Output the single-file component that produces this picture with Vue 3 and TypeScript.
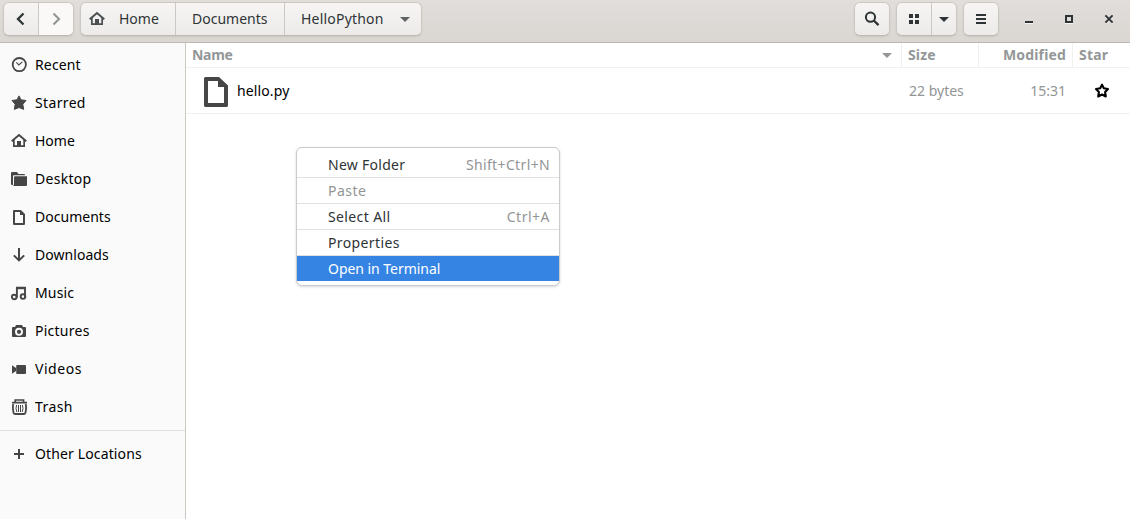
<script setup lang="ts">
interface Place { name: string; icon: string; ls: number }
interface MenuRow { label: string; keys?: string; kind?: string; ls: number; kls?: number }

const icons: Record<string, string> = {
  clock: '<circle cx="8.3" cy="7.6" r="6.6" fill="none" stroke="currentColor" stroke-width="1.8"/><path d="M5.3 5.4 7.8 7.9 11.4 4.8" fill="none" stroke="currentColor" stroke-width="1.1"/>',
  star: '<path d="M8 .9 10 4.8 15 5.5 11.8 9.2 12.7 14.4 8 12.5 3.3 14.4 4.2 9.2 1 5.5 6 4.8Z" fill="currentColor" stroke="currentColor" stroke-width="1" stroke-linejoin="round"/>',
  home: '<path d="M.7 8.2 8 2 15.3 8.2" fill="none" stroke="currentColor" stroke-width="1.9"/><path d="M2 7V14H14V7L12.3 5.6V12.2H10V8H6V12.2H3.7V5.6Z" fill="currentColor"/>',
  folder: '<path d="M0 2.2Q0 1 1 1H6L7.5 3H13Q14 3 14 4V4.3H3Q2 4.3 2 5.5V14H1Q0 14 0 13Z" fill="currentColor"/><path d="M3 6.3Q3 5.3 4 5.3H16V14Q16 15 15 15H2Q3 14.5 3 13Z" fill="currentColor"/>',
  page: '<path d="M3 2H9.5L13 5.5V15H3Z" fill="none" stroke="currentColor" stroke-width="2" stroke-linejoin="round"/><path d="M9 2V6H13Z" fill="currentColor"/>',
  down: '<path d="M8 1V13M2.8 8.4 8 13.4 13.2 8.4" fill="none" stroke="currentColor" stroke-width="2"/>',
  music: '<g transform="translate(0 .8)"><path d="M5.9 12V2H14V11.5" fill="none" stroke="currentColor" stroke-width="1.9"/><path d="M5 1.2H15V3.4H5Z" fill="currentColor"/><circle cx="3.2" cy="11.2" r="2.3" fill="none" stroke="currentColor" stroke-width="1.9"/><circle cx="12" cy="10.8" r="2.3" fill="none" stroke="currentColor" stroke-width="1.9"/></g>',
  camera: '<path fill-rule="evenodd" d="M5 2H11L12 4H14Q15 4 15 5V13Q15 14 14 14H2Q1 14 1 13V5Q1 4 2 4H4ZM8 4.8A4 4 0 1 0 8 12.8A4 4 0 1 0 8 4.8Z" fill="currentColor"/><circle cx="8" cy="8.8" r="2.1" fill="currentColor"/>',
  video: '<path d="M1 4.2 5 7V10L1 12.8Z" fill="currentColor"/><rect x="5.2" y="4" width="9.8" height="9" rx="1" fill="currentColor"/>',
  trash: '<path d="M1 3.6H16M4.2 2.7V1H12.6V2.7" fill="none" stroke="currentColor" stroke-width="1.6"/><path d="M2.3 5Q1.3 9 2.7 14.2Q3 15 4.3 15H12.7Q14 15 14.3 14.2Q15.7 9 14.7 5" fill="none" stroke="currentColor" stroke-width="1.8"/><path d="M5.6 6Q4.3 9.5 5.8 13M7.5 6V13M9.5 6V13M11.4 6Q12.7 9.5 11.2 13" fill="none" stroke="currentColor" stroke-width="1"/>',
  plus: '<path d="M8 3V13M3 8H13" stroke="currentColor" stroke-width="2"/>',
}

const places: Place[] = [
  { name: 'Recent', icon: 'clock', ls: 0.15 },
  { name: 'Starred', icon: 'star', ls: 0.35 },
  { name: 'Home', icon: 'home', ls: 0 },
  { name: 'Desktop', icon: 'folder', ls: 0.3 },
  { name: 'Documents', icon: 'page', ls: 0.02 },
  { name: 'Downloads', icon: 'down', ls: 0.05 },
  { name: 'Music', icon: 'music', ls: 0.15 },
  { name: 'Pictures', icon: 'camera', ls: 0.25 },
  { name: 'Videos', icon: 'video', ls: 0.55 },
  { name: 'Trash', icon: 'trash', ls: 0.4 },
]

const menu: MenuRow[] = [
  { label: 'New Folder', keys: 'Shift+Ctrl+N', ls: 0.27, kls: 0.36 },
  { label: 'Paste', kind: 'disabled', ls: 0.45 },
  { label: 'Select All', keys: 'Ctrl+A', ls: 0.38, kls: 0.5 },
  { label: 'Properties', ls: 0.38 },
  { label: 'Open in Terminal', kind: 'active', ls: -0.04 },
]
</script>

<template>
  <div class="window">
    <header class="bar">
      <div class="group nav">
        <button class="btn"><svg width="16" height="16"><path d="M10.5 2.5 5 8l5.5 5.5" fill="none" stroke="currentColor" stroke-width="2.3" /></svg></button>
        <button class="btn off"><svg width="16" height="16"><path d="M5.5 2.5 11 8l-5.5 5.5" fill="none" stroke="currentColor" stroke-width="2.1" /></svg></button>
      </div>
      <div class="group path">
        <button class="btn crumb home"><svg width="16" height="16" v-html="icons.home"></svg><span>Home</span></button>
        <button class="btn crumb docs"><span>Documents</span></button>
        <button class="btn crumb here"><span>HelloPython</span><i class="tri"></i></button>
      </div>
      <div class="space"></div>
      <div class="group single search">
        <button class="btn"><svg width="16" height="16"><circle cx="6.5" cy="6.2" r="4.6" fill="none" stroke="currentColor" stroke-width="2" /><path d="M9.8 9.5 14.5 14.2" stroke="currentColor" stroke-width="2.4" /></svg></button>
      </div>
      <div class="group view">
        <button class="btn"><svg width="16" height="16"><path d="M3 3h4v4H3zM9 3h4v4H9zM3 9h4v4H3zM9 9h4v4H9z" fill="currentColor" /></svg></button>
        <button class="btn"><i class="tri"></i></button>
      </div>
      <div class="group single">
        <button class="btn"><svg width="16" height="16"><path d="M3 4h10M3 8h10M3 12h10" stroke="currentColor" stroke-width="2" /></svg></button>
      </div>
      <div class="controls">
        <svg width="16" height="16"><path d="M4 12.5h8" stroke="#fff" stroke-opacity=".7" /><path d="M4 11h8" stroke="currentColor" stroke-width="2" /></svg>
        <svg width="16" height="16"><path d="M5 5h6v6H5z" fill="none" stroke="currentColor" stroke-width="2" /><path d="M4 12.5h8" stroke="#fff" stroke-opacity=".7" /></svg>
        <svg width="16" height="16"><path d="M4.4 5.4l7.2 7.2M11.6 5.4l-7.2 7.2" stroke="#fff" stroke-opacity=".5" stroke-width="2" /><path d="M4.4 4.4l7.2 7.2M11.6 4.4l-7.2 7.2" stroke="currentColor" stroke-width="2" /></svg>
      </div>
    </header>

    <div class="body">
      <aside class="side">
        <div v-for="p in places" :key="p.name" class="place">
          <svg width="16" height="16" v-html="icons[p.icon]"></svg>
          <span :style="{ letterSpacing: p.ls + 'px' }">{{ p.name }}</span>
        </div>
        <hr />
        <div class="place other"><svg width="16" height="16" v-html="icons.plus"></svg><span>Other Locations</span></div>
      </aside>

      <main class="list">
        <div class="row heads">
          <div class="name"><span>Name</span><i class="tri"></i></div>
          <div class="size">Size</div>
          <div class="mod">Modified</div>
          <div class="fav">Star</div>
        </div>
        <div class="row file">
          <div class="name">
            <svg width="24" height="30"><path fill-rule="evenodd" d="M0 1.5Q0 0 1.5 0H15L24 8.5V28.5Q24 30 22.5 30H1.5Q0 30 0 28.5ZM4 4V26H20V10H14V4Z" fill="#464646" /></svg>
            <span>hello.py</span>
          </div>
          <div class="size">22 bytes</div>
          <div class="mod">15:31</div>
          <div class="fav"><svg width="16" height="16"><path d="M8 1.6 9.8 5.3 14 6 11.1 9 11.8 13.5 8 11.5 4.2 13.5 4.9 9 2 6 6.2 5.3Z" fill="none" stroke="#000" stroke-width="2.1" stroke-linejoin="round" /></svg></div>
        </div>
      </main>
    </div>

    <div class="menu">
      <div v-for="m in menu" :key="m.label" class="item" :class="m.kind">
        <span :style="{ letterSpacing: m.ls + 'px' }">{{ m.label }}</span>
        <span v-if="m.keys" class="keys" :style="{ letterSpacing: m.kls + 'px' }">{{ m.keys }}</span>
      </div>
    </div>
  </div>
</template>

<style>
body { margin: 0; overflow: hidden; }
</style>

<style scoped>
.window { position: relative; width: 1130px; height: 519px; display: flex; flex-direction: column; background: #fff; font: 14px/20px "Noto Sans", "Open Sans", sans-serif; color: #000; white-space: nowrap; overflow: hidden; }
.window * { box-sizing: border-box; }
svg { display: block; flex: none; }
.bar { height: 43px; flex: none; display: flex; align-items: flex-start; padding: 2px 13px 0 3px; background: linear-gradient(#e1dedb, #dad6d2); border-bottom: 1px solid #bfb8b1; color: #2e3436; }
.group { display: flex; height: 34px; border: 1px solid #cdc7c2; border-bottom-color: #bfb8b1; border-radius: 6px; overflow: hidden; box-shadow: 0 1px 2px rgba(0, 0, 0, .08); }
.btn { display: flex; align-items: center; justify-content: center; border: 0; border-left: 1px solid #cdc7c2; margin: 0; padding: 0; height: 32px; background: linear-gradient(#f6f5f4, #edebe9); color: inherit; font: inherit; }
.btn:first-child { border-left: 0; }
.btn.off { background: #faf9f8; color: #929595; }
.nav { width: 71px; margin-right: 6px; }
.nav .btn { width: 34px; }
.nav .off { width: 35px; }
.path { width: 342px; }
.crumb { justify-content: flex-start; }
.home { width: 94px; padding-left: 8px; color: #4a4f51; }
.home span { margin-left: 14px; color: #2e3436; }
.docs { width: 109px; padding-left: 16px; }
.here { width: 137px; padding-left: 16px; }
.here span { width: 83px; text-align: left; letter-spacing: .2px; }
.here .tri { margin-left: 16px; opacity: .75; }
.tri { display: block; width: 0; height: 0; border: 5px solid transparent; border-top-color: currentColor; border-bottom: 0; }
.space { flex: 1; }
.single { width: 36px; }
.single .btn { width: 34px; }
.search { margin-right: 6px; }
.view { width: 61px; margin-right: 6px; }
.view .btn:first-child { width: 34px; }
.view .btn:last-child { width: 25px; }
.controls { display: flex; gap: 24px; margin: 9px 0 0 22px; }
.body { flex: 1; display: flex; min-height: 0; }
.side { width: 186px; flex: none; background: #fafafa; border-right: 1px solid #cdc7c2; padding-top: 3px; }
.place { display: flex; align-items: center; height: 38px; padding-left: 11px; gap: 8px; }
.place svg { color: #464646; }
.other { letter-spacing: .13px; }
hr { height: 1px; border: 0; margin: 4px 0; background: #dfdfdf; }
.list { flex: 1; }
.row { display: flex; border-bottom: 1px solid #f1f1f1; }
.row > div { display: flex; align-items: center; }
.name { width: 716px; padding-left: 6px; border-right: 1px solid transparent; }
.size { width: 77px; padding-left: 6px; border-right: 1px solid transparent; }
.mod { width: 94px; padding-right: 6px; justify-content: flex-end; border-right: 1px solid transparent; }
.fav { flex: 1; padding-left: 6px; }
.heads { height: 25px; color: #949797; font-weight: 700; }
.heads > div { border-right-color: #f0f0f0; }
.heads > .fav { border-right: 0; letter-spacing: .2px; }
.heads .name span { letter-spacing: -.3px; }
.heads .size, .heads .mod { letter-spacing: .15px; }
.heads .tri { margin: 0 9px 0 auto; }
.file { height: 46px; color: #929595; }
.file .name { padding-left: 18px; gap: 9px; color: #000; letter-spacing: .12px; }
.file .name svg { margin-top: 2px; }
.file .size { padding-left: 7px; }
.file .fav { padding-left: 21px; }
.menu { position: absolute; left: 296px; top: 147px; width: 264px; height: 139px; padding: 4px 0; background: #fff; border: 1px solid #cbcbcb; border-radius: 6px; box-shadow: 0 1px 3px rgba(0, 0, 0, .16); color: #2e3436; }
.item { display: flex; align-items: center; justify-content: space-between; height: 26px; padding: 0 9px 0 31px; border-bottom: 1px solid #e0e0e0; }
.item .keys, .disabled { color: #929595; }
.active { height: 25px; border: 0; background: #3584e4; color: #fff; }
</style>
